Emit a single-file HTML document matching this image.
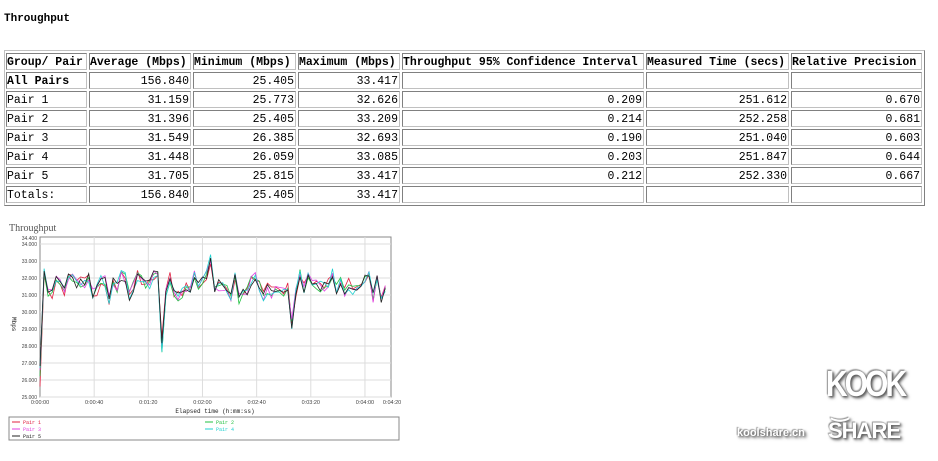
<!DOCTYPE html>
<html><head><meta charset="utf-8"><style>
body{margin:0;width:938px;height:461px;background:#fff;position:relative;overflow:hidden;font-family:"Liberation Mono","Noto Sans CJK SC",monospace;}
.t{position:absolute;font-size:11.5px;line-height:17px;white-space:nowrap;color:#000}
.c{position:absolute;border:1px solid #808080;border-right-color:#c0c0c0;border-bottom-color:#c0c0c0;box-sizing:border-box;}
.b{font-weight:bold}
.r{text-align:right}
.tb{position:absolute;left:4px;top:50px;width:921px;height:156px;border:1px solid #c0c0c0;border-right-color:#808080;border-bottom-color:#808080;box-sizing:border-box}
.logo{position:absolute;color:#fff;font-family:"Liberation Sans",sans-serif;font-weight:bold;text-shadow:1px 1px 2px #555,-1px -1px 1px #999,2px 2px 3px #777}
</style></head><body>
<div class="t b" style="left:4px;top:11px;font-size:11px">Throughput</div>
<div class="tb"></div>
<div id="tbl"></div>
<svg id="ch" width="938" height="461" style="position:absolute;left:0;top:0"></svg>
<div class="logo" style="left:826px;top:368px;font-size:30px;letter-spacing:-3px;transform:scaleY(1.2)">KOOK</div>
<div class="logo" style="left:832px;top:398px;font-size:20px;color:#fff">&#8255;</div>
<div class="logo" style="left:828px;top:418px;font-size:22px;letter-spacing:-1px">SHARE</div>
<div class="logo" style="left:737px;top:427px;font-size:11px">koolshare.cn</div>
<script>
var xs=[5,88,192,297,401,645,790,923],ys=[52,71,90,109,128,147,166,185,204];
var rows=[["Group/ Pair","Average (Mbps)","Minimum (Mbps)","Maximum (Mbps)","Throughput 95% Confidence Interval","Measured Time (secs)","Relative Precision"],
["All Pairs","156.840","25.405","33.417","","",""],
["Pair 1","31.159","25.773","32.626","0.209","251.612","0.670"],
["Pair 2","31.396","25.405","33.209","0.214","252.258","0.681"],
["Pair 3","31.549","26.385","32.693","0.190","251.040","0.603"],
["Pair 4","31.448","26.059","33.085","0.203","251.847","0.644"],
["Pair 5","31.705","25.815","33.417","0.212","252.330","0.667"],
["Totals:","156.840","25.405","33.417","","",""]];
var h="";
for(var r=0;r<8;r++)for(var c=0;c<7;c++){
var L=xs[c]+1,T=ys[r]+1,W=xs[c+1]-xs[c]-2,H=ys[r+1]-ys[r]-2;
h+='<div class="c" style="left:'+L+'px;top:'+T+'px;width:'+W+'px;height:'+H+'px"></div>';
var cls="t"+((r==0||(r==1&&c==0))?" b":"")+((r>0&&c>0)?" r":"");
var st=(r>0&&c>0)?'left:'+L+'px;width:'+(W-2)+'px;':'left:'+(L+1)+'px;';
h+='<div class="'+cls+'" style="'+st+'top:'+(T+1)+'px">'+rows[r][c]+'</div>';}
document.getElementById("tbl").innerHTML=h;
var s="";
s+='<text x="9" y="231" font-family="Liberation Serif" font-size="10" fill="#555">Throughput</text>';
s+='<rect x="40" y="237" width="351" height="160" fill="#fff" stroke="#888"/>';
function yv(v){return 397-(v-25)*17}
function xv(t){return 40+t*1.354}
for(var v=25;v<=34;v++){var y=yv(v);s+='<line x1="40" x2="391" y1="'+y+'" y2="'+y+'" stroke="#ddd"/><text x="37" y="'+(y+2)+'" font-size="5" text-anchor="end" fill="#444" font-family="Liberation Sans">'+v+'.000</text>';}
s+='<text x="37" y="240" font-size="5" text-anchor="end" fill="#444" font-family="Liberation Sans">34.400</text>';
var lab=["0:00:00","0:00:40","0:01:20","0:02:00","0:02:40","0:03:20","0:04:00","0:04:20"];
for(var i=0;i<8;i++){var t=i<7?i*40:260,x=xv(t);if(i>0&&i<7)s+='<line x1="'+x+'" x2="'+x+'" y1="237" y2="397" stroke="#ddd"/>';s+='<text x="'+x+'" y="404" font-size="5.5" text-anchor="middle" fill="#444" font-family="Liberation Sans">'+lab[i]+'</text>';}
s+='<text x="215" y="413" font-size="6" text-anchor="middle" fill="#222" font-family="Liberation Mono">Elapsed time (h:mm:ss)</text>';
s+='<text x="12" y="317" font-size="6" fill="#222" transform="rotate(90 12 317)" font-family="Liberation Mono">Mbps</text>';
var seed=7;function rnd(){seed=(seed*16807)%2147483647;return seed/2147483647}
var cols=["#e02040","#20c040","#e040e0","#20d0d0","#202020"];
var N=86,base=[];for(var k=0;k<N;k++)base.push(31.5+(rnd()-0.5)*1.6);
for(var p=0;p<5;p++){var pts=[];for(var k=0;k<N;k++){var t=k*3,v=base[k]+(rnd()-0.5)*0.7;
if(k==0)v=25.5+rnd()*1.5;if(k==1)v=32+rnd()*0.6;if(k==30)v=27.6+rnd()*1;if(k==62)v=29+rnd()*0.8;if(k==42)v=32.8+rnd()*0.6;
pts.push(xv(t).toFixed(1)+","+yv(Math.min(33.4,v)).toFixed(1));}
s+='<polyline points="'+pts.join(" ")+'" fill="none" stroke="'+cols[p]+'" stroke-width="0.8"/>';}
s+='<rect x="9" y="417" width="390" height="23" fill="#fff" stroke="#888"/>';
var lg=[["Pair 1",cols[0],12,424],["Pair 3",cols[2],12,431],["Pair 5",cols[4],12,438],["Pair 2",cols[1],205,424],["Pair 4",cols[3],205,431]];
lg.forEach(function(a){s+='<line x1="'+a[2]+'" x2="'+(a[2]+8)+'" y1="'+(a[3]-2)+'" y2="'+(a[3]-2)+'" stroke="'+a[1]+'"/><text x="'+(a[2]+11)+'" y="'+a[3]+'" font-size="5" fill="'+a[1]+'" font-family="Liberation Mono">'+a[0]+'</text>'});
document.getElementById("ch").innerHTML=s;
</script>
</body></html>
